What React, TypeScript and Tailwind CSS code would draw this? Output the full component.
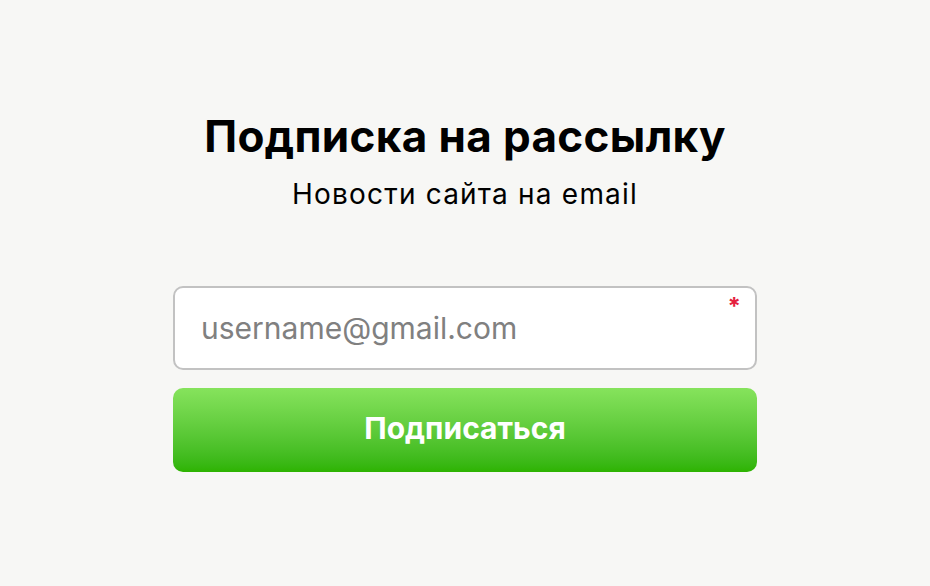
import React from "react";

export default function App() {
  return (
    <div className="w-[930px] h-[586px] bg-[#f7f7f5] flex flex-col items-center" style={{ fontFamily: "Inter, 'Noto Sans', sans-serif" }}>
      <h1 className="mt-[108px] text-[44px] leading-[56px] font-bold text-black tracking-[0.35px]">Подписка на рассылку</h1>
      <p className="mt-[14px] text-[28px] leading-[32px] text-black tracking-[1.2px]">Новости сайта на email</p>
      <div className="mt-[76px] w-[584px] flex flex-col gap-[18px]">
        <div className="relative h-[84px] rounded-[10px] border-2 border-[#c2c2c2] bg-white flex items-center px-[26px]">
          <input
            className="w-full outline-none bg-transparent text-[30px] text-black placeholder:text-[#808080]"
            placeholder="username@gmail.com"
          />
          <span className="absolute right-[14px] top-[7px] text-[#e5213f] text-[24px] font-bold leading-none">*</span>
        </div>
        <button className="h-[84px] pb-[3px] rounded-[10px] bg-gradient-to-b from-[#86e35c] to-[#2db300] text-white text-[30px] font-bold">
          Подписаться
        </button>
      </div>
    </div>
  );
}
